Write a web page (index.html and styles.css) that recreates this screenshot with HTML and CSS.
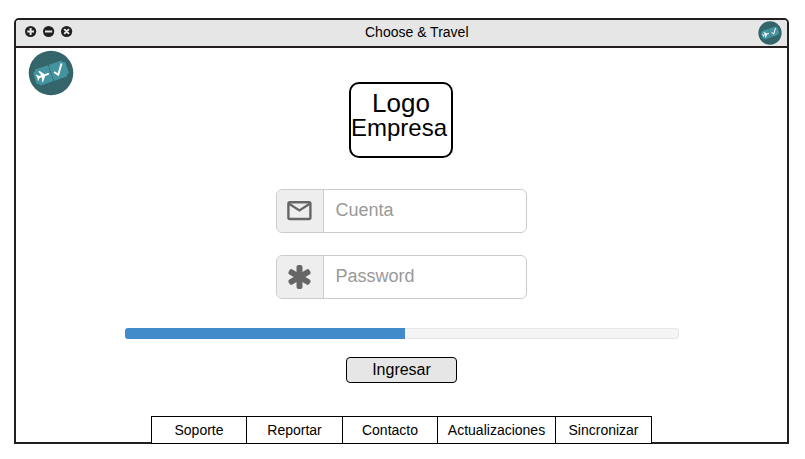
FILE: index.html
```html
<!DOCTYPE html>
<html lang="es">
<head>
<meta charset="utf-8">
<title>Choose &amp; Travel</title>
<link rel="stylesheet" href="styles.css">
</head>
<body>
<svg class="symbols" aria-hidden="true">
  <symbol id="brand" viewBox="0 0 46 46">
    <circle cx="23" cy="23" r="22.3" fill="#34656a"/>
    <g transform="rotate(-19 23 23)">
      <path d="M9 14.5H37Q37 17 40 17V29Q37 29 37 31.5H9Q9 29 6 29V17Q9 17 9 14.5Z" fill="#4394a0"/>
      <path d="M23 14.5V31.5" stroke="#34656a" stroke-width="1" stroke-dasharray="2 1"/>
      <path d="M21 23Q21 22 19.5 22H16.5L13 17.5H11.5L13 22H10.5L9 20H8L8.7 23L8 26H9L10.5 24H13L11.5 28.5H13L16.5 24H19.5Q21 24 21 23Z" fill="#fff"/>
      <path d="M26.3 23L29.3 27L36 17.5" fill="none" stroke="#fff" stroke-width="1.9"/>
    </g>
  </symbol>
</svg>
<div class="window">
  <header class="titlebar">
    <svg class="controls" viewBox="0 0 48 12">
      <g fill="#231f20"><circle cx="5.6" cy="5.5" r="5.6"/><circle cx="23.6" cy="5.5" r="5.6"/><circle cx="41.6" cy="5.5" r="5.6"/></g>
      <path d="M2.2 5.5H9M5.6 2.1V8.9M20 5.5H27.2M39.2 3.1L44 7.9M44 3.1L39.2 7.9" stroke="#e6e6e6" stroke-width="2"/>
    </svg>
    <h1 class="title">Choose &amp; Travel</h1>
    <svg class="brand-small"><use href="#brand"/></svg>
  </header>
  <main class="content">
    <svg class="brand-large"><use href="#brand"/></svg>
    <div class="logo"><span class="logo-top">Logo</span><span class="logo-bottom">Empresa</span></div>
    <form class="form">
      <label class="field">
        <span class="addon"><svg width="26" height="20" viewBox="0 0 26 20"><rect x="1.4" y="1.2" width="22" height="16.8" rx="1.4" fill="none" stroke="#666" stroke-width="2.4"/><path d="M2 2.8L12.4 9.4L22.8 2.8" fill="none" stroke="#666" stroke-width="2.3"/></svg></span>
        <span class="placeholder">Cuenta</span>
      </label>
      <label class="field">
        <span class="addon"><svg width="26" height="26" viewBox="0 0 26 26"><g fill="#666"><rect x="9.5" y="1" width="6" height="24" rx="2"/><rect x="9.5" y="1" width="6" height="24" rx="2" transform="rotate(60 12.5 13)"/><rect x="9.5" y="1" width="6" height="24" rx="2" transform="rotate(-60 12.5 13)"/></g></svg></span>
        <span class="placeholder">Password</span>
      </label>
    </form>
    <div class="progress"><div class="progress-bar"></div></div>
    <button class="submit" type="button">Ingresar</button>
    <nav class="tabs">
      <a class="tab">Soporte</a>
      <a class="tab tab-report">Reportar</a>
      <a class="tab">Contacto</a>
      <a class="tab tab-wide">Actualizaciones</a>
      <a class="tab tab-last">Sincronizar</a>
    </nav>
  </main>
</div>
</body>
</html>
```
FILE: styles.css
```css
* { box-sizing: border-box; }
body {
  margin: 0;
  padding: 18px 16px 15px 14px;
  background: #fff;
  color: #000;
  font-family: "Liberation Sans", Arial, sans-serif;
}
.symbols { position: absolute; width: 0; height: 0; }
.window {
  display: flex;
  flex-direction: column;
  height: 426px;
  border: 2px solid #231f20;
  border-radius: 5px 5px 0 0;
}
.titlebar {
  display: grid;
  grid-template-columns: 340px auto 1fr;
  align-items: center;
  height: 28px;
  padding: 0 5px 0 9px;
  background: #e6e6e6;
  border-bottom: 2px solid #231f20;
  border-radius: 3px 3px 0 0;
}
.controls { width: 48px; height: 12px; margin-bottom: 3px; overflow: visible; }
.title { margin: 0 0 3px; font-size: 14px; font-weight: 400; line-height: 16px; }
.brand-small { width: 24px; height: 24px; justify-self: end; }
.content {
  position: relative;
  display: flex;
  flex: 1;
  flex-direction: column;
  align-items: center;
  padding-top: 34px;
}
.brand-large { position: absolute; left: 12px; top: 2px; width: 46px; height: 46px; }
.logo {
  display: flex;
  flex-direction: column;
  width: 104px;
  height: 76px;
  padding-top: 6px;
  border: 2px solid #000;
  border-radius: 10px;
  text-align: center;
  margin-right: 1px;
}
.logo-top { font-size: 26px; line-height: 26px; }
.logo-bottom { font-size: 24px; line-height: 24px; margin-right: 4px; }
.form { display: flex; flex-direction: column; gap: 22px; margin: 31px 1px 0 0; }
.field {
  display: flex;
  width: 251px;
  height: 44px;
  border: 1px solid #ccc;
  border-radius: 6px;
}
.addon {
  display: flex;
  align-items: center;
  justify-content: center;
  width: 47px;
  background: #eee;
  border-right: 1px solid #ccc;
  border-radius: 5px 0 0 5px;
}
.placeholder { padding: 10px 0 0 12px; color: #999; font-size: 18px; line-height: 20px; }
.progress {
  width: 554px;
  height: 11px;
  margin: 29px 0 0 1px;
  background: #f5f5f5;
  border-radius: 4px;
  box-shadow: inset 0 0 0 1px #e6e6e6;
}
.progress-bar { width: 280px; height: 11px; background: #428bca; border-radius: 3px 0 0 3px; }
.submit {
  width: 111px;
  height: 26px;
  margin-top: 18px;
  padding: 0 0 1px;
  background: #e6e6e6;
  border: 1px solid #000;
  border-radius: 4px;
  color: #000;
  font: 16px/20px "Liberation Sans", Arial, sans-serif;
}
.tabs { display: flex; margin: auto 0 -2px; font-size: 14px; line-height: 26px; text-align: center; }
.tab { width: 95px; height: 28px; background: #fff; border: 1px solid #000; border-right: 0; }
.tab-report { width: 96px; }
.tab-wide { width: 118px; }
.tab-last { width: 97px; border-right: 1px solid #000; }
```
